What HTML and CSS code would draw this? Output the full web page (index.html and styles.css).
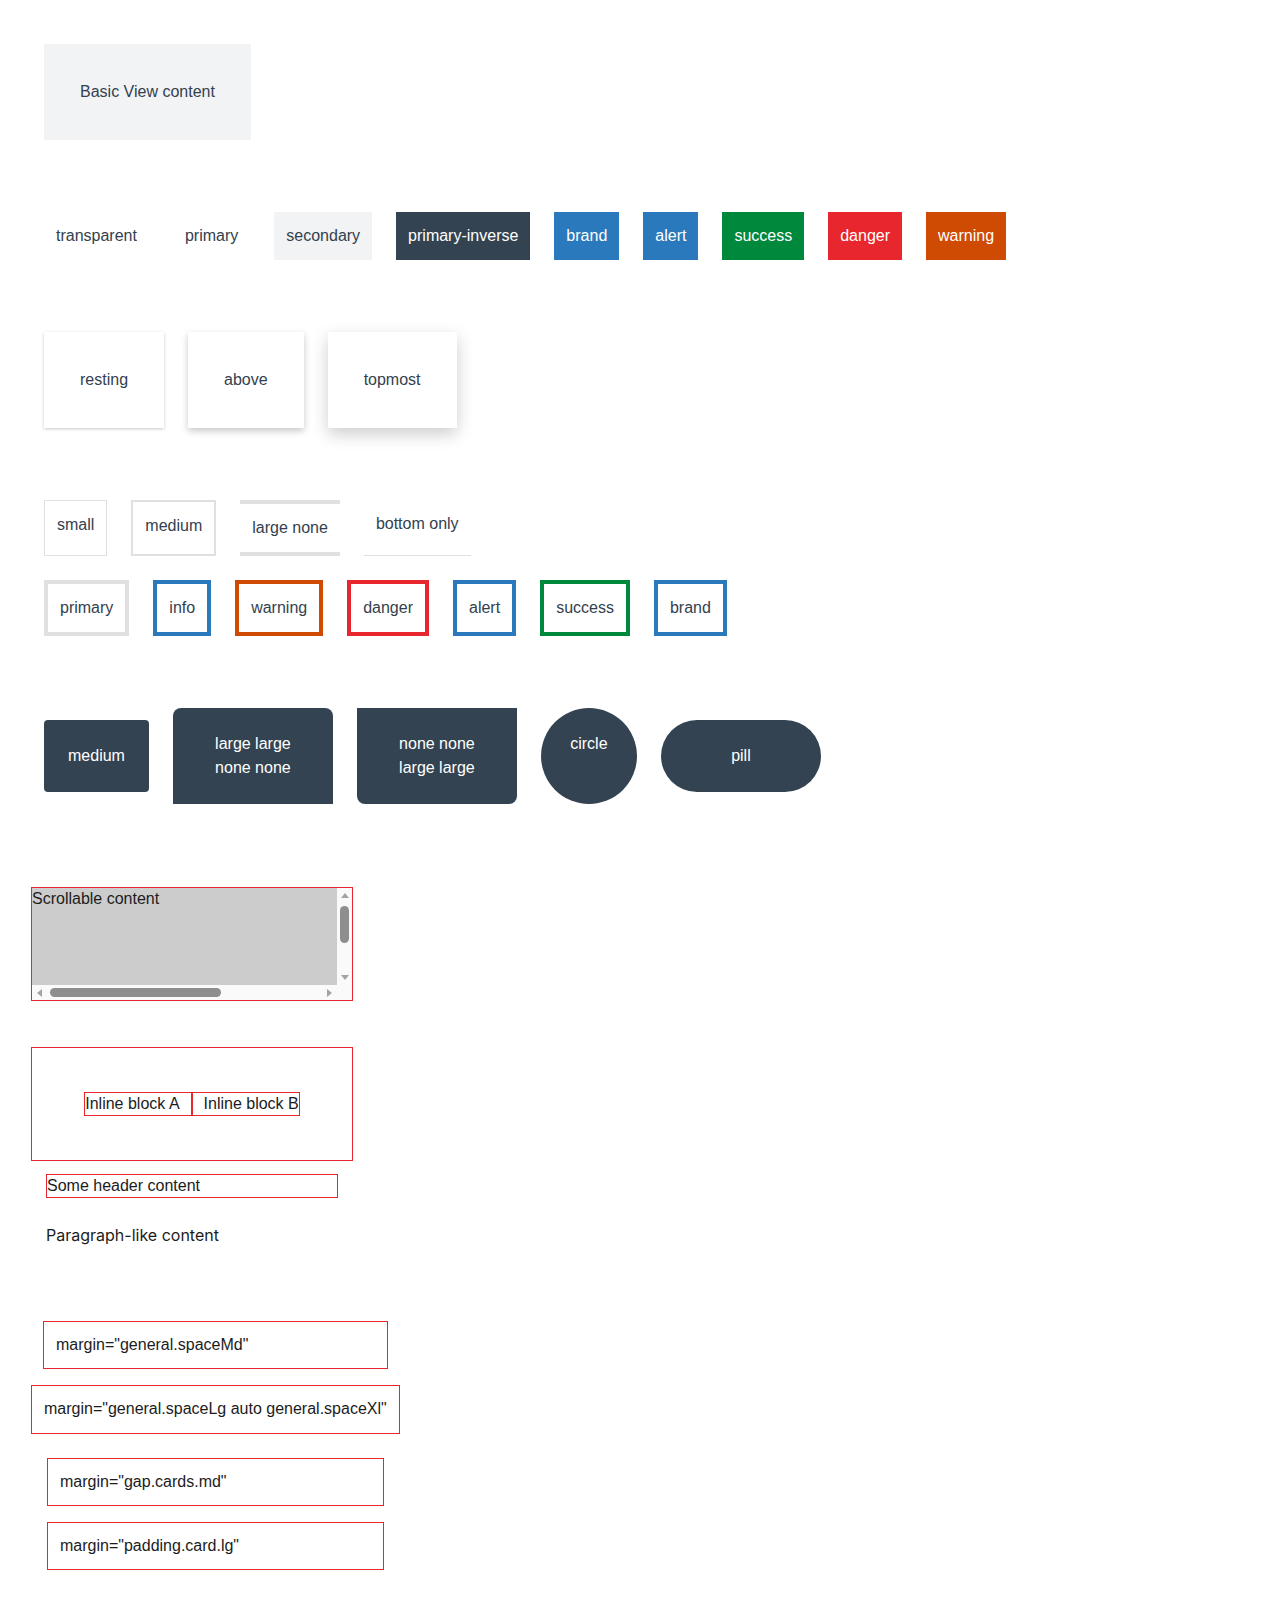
FILE: index.html
```html
<!DOCTYPE html>
<html lang="en">
<head>
  <meta charset="UTF-8">
  <meta name="viewport" content="width=device-width, initial-scale=1.0">
  <title>View - Examples</title>
  <link rel="stylesheet" href="styles.css">
</head>
<body>
  <div class="showcase">
    <!-- basic -->
    <div class="view view-secondary view-pad-xl">Basic View content</div>

    <!-- backgrounds -->
    <div class="row">
      <div class="view view-pad-md">transparent</div>
      <div class="view view-pad-md">primary</div>
      <div class="view view-pad-md view-secondary">secondary</div>
      <div class="view view-pad-md view-inverse">primary-inverse</div>
      <div class="view view-pad-md view-brand">brand</div>
      <div class="view view-pad-md view-alert">alert</div>
      <div class="view view-pad-md view-success">success</div>
      <div class="view view-pad-md view-danger">danger</div>
      <div class="view view-pad-md view-warning">warning</div>
    </div>

    <!-- shadows -->
    <div class="row">
      <div class="view view-pad-xl shadow-resting">resting</div>
      <div class="view view-pad-xl shadow-above">above</div>
      <div class="view view-pad-xl shadow-topmost">topmost</div>
    </div>

    <!-- borders -->
    <div class="border-rows">
      <div class="row row-stretch">
        <div class="view view-pad-md bw-small">small</div>
        <div class="view view-pad-md bw-medium">medium</div>
        <div class="view view-pad-md bw-large-none">large none</div>
        <div class="view view-pad-md bw-bottom">bottom only</div>
      </div>
      <div class="row">
        <div class="view view-pad-md bc bc-primary">primary</div>
        <div class="view view-pad-md bc bc-info">info</div>
        <div class="view view-pad-md bc bc-warning">warning</div>
        <div class="view view-pad-md bc bc-danger">danger</div>
        <div class="view view-pad-md bc bc-alert">alert</div>
        <div class="view view-pad-md bc bc-success">success</div>
        <div class="view view-pad-md bc bc-brand">brand</div>
      </div>
    </div>

    <!-- radius -->
    <div class="row row-center">
      <div class="view view-pad-lg view-inverse r-medium">medium</div>
      <div class="view view-pad-lg view-inverse r-wide r-top">large large none none</div>
      <div class="view view-pad-lg view-inverse r-wide r-bottom">none none large large</div>
      <div class="view view-pad-lg view-inverse r-circle">circle</div>
      <div class="view view-pad-lg view-inverse r-wide r-pill">pill</div>
    </div>
  </div>

  <div class="layout">
    <div class="scroller">
      <div class="scroller-viewport">
        <div class="scroller-content">Scrollable content</div>
      </div>
      <div class="scrollbar scrollbar-v">
        <span class="sb-btn"><i class="arrow arrow-up"></i></span>
        <span class="sb-track"><i class="sb-thumb"></i></span>
        <span class="sb-btn"><i class="arrow arrow-down"></i></span>
      </div>
      <div class="scrollbar scrollbar-h">
        <span class="sb-btn"><i class="arrow arrow-left"></i></span>
        <span class="sb-track"><i class="sb-thumb"></i></span>
        <span class="sb-btn"><i class="arrow arrow-right"></i></span>
      </div>
      <div class="scrollbar-corner"></div>
    </div>

    <div class="inline-wrap">
      <div class="inline-item inline-a">Inline block A</div>
      <div class="inline-item inline-b">Inline block B</div>
    </div>

    <header class="as-header">Some header content</header>
    <p class="as-paragraph">Paragraph-like content</p>
  </div>

  <div class="margins">
    <div class="outlined m-md">margin="general.spaceMd"</div>
    <div class="outlined m-lg-auto-xl">margin="general.spaceLg auto general.spaceXl"</div>
    <div class="outlined m-gap">margin="gap.cards.md"</div>
    <div class="outlined m-card">margin="padding.card.lg"</div>
  </div>
</body>
</html>
```

FILE: styles.css
```css
body {
  margin: 0;
  font-family: 'Liberation Sans', Arial, sans-serif;
  font-size: 16px;
  color: #1c1c1c;
  background: #fff;
}

.showcase {
  padding: 44px 44px 0;
  display: flex;
  flex-direction: column;
  align-items: flex-start;
  gap: 72px;
  color: #33414e;
  line-height: 24px;
}

.row {
  display: flex;
  gap: 24px;
  align-items: flex-start;
}

.row-stretch {
  align-items: stretch;
}

.row-center {
  align-items: center;
}

.border-rows {
  display: flex;
  flex-direction: column;
  gap: 24px;
}

.view {
  box-sizing: border-box;
  background: #fff;
}

.view-pad-md { padding: 12px; }
.view-pad-lg { padding: 24px; }
.view-pad-xl { padding: 36px; }

.view-secondary { background: #f2f3f5; }
.view-inverse { background: #344351; color: #fff; }
.view-brand { background: #2a79bc; color: #fff; }
.view-alert { background: #2a79bc; color: #fff; }
.view-success { background: #00883d; color: #fff; }
.view-danger { background: #e8262d; color: #fff; }
.view-warning { background: #cf4a02; color: #fff; }

/* elevation */
.shadow-resting { box-shadow: 0 1px 3px rgba(0, 0, 0, 0.22); }
.shadow-above { box-shadow: 0 3px 7px rgba(0, 0, 0, 0.22); }
.shadow-topmost { box-shadow: 0 6px 16px rgba(0, 0, 0, 0.2); }

/* border widths */
.bw-small { border: 1px solid #e0e0e0; }
.bw-medium { border: 2px solid #e0e0e0; }
.bw-large-none {
  border-top: 4px solid #e0e0e0;
  border-bottom: 4px solid #e0e0e0;
}
.bw-bottom { border-bottom: 1px solid #e0e0e0; }

/* border colors */
.bc { border: 4px solid #e0e0e0; }
.bc-info { border-color: #2a79bc; }
.bc-warning { border-color: #cf4a02; }
.bc-danger { border-color: #e8262d; }
.bc-alert { border-color: #2a79bc; }
.bc-success { border-color: #00883d; }
.bc-brand { border-color: #2a79bc; }

/* radius */
.view.r-medium { border-radius: 4px; }
.r-wide { width: 160px; text-align: center; }
.r-top { border-radius: 8px 8px 0 0; }
.r-bottom { border-radius: 0 0 8px 8px; }
.r-circle {
  width: 96px;
  height: 96px;
  border-radius: 50%;
  text-align: center;
}
.r-pill { border-radius: 9999px; }

/* layout helpers */
.layout {
  width: 322px;
  margin: 83px 0 0 31px;
  line-height: 1.4;
}

/* scroll box with classic scrollbars */
.scroller {
  box-sizing: border-box;
  width: 322px;
  height: 114px;
  border: 1px solid #e8262d;
  display: grid;
  grid-template-columns: 1fr 15px;
  grid-template-rows: 1fr 15px;
  background: #fafafa;
}

.scroller-viewport {
  overflow: hidden;
}

.scroller-content {
  width: 474px;
  height: 151px;
  background: #ccc;
}

.scrollbar {
  display: flex;
}

.scrollbar-v { flex-direction: column; }

.sb-btn {
  flex: 0 0 15px;
  height: 15px;
  display: flex;
  align-items: center;
  justify-content: center;
}

.sb-track {
  flex: 1;
  padding: 3px;
}

.sb-thumb {
  display: block;
  background: #8e8e8e;
  border-radius: 5px;
}

.scrollbar-v .sb-thumb { height: 37px; }
.scrollbar-h .sb-thumb { width: 171px; height: 9px; }

.arrow {
  width: 0;
  height: 0;
  border: 4px solid transparent;
}

.arrow-up { border-top: 0; border-bottom: 5px solid #a3a3a3; }
.arrow-down { border-bottom: 0; border-top: 5px solid #a3a3a3; }
.arrow-left { border-left: 0; border-right: 5px solid #a3a3a3; }
.arrow-right { border-right: 0; border-left: 5px solid #a3a3a3; }

.scrollbar-corner {
  background: #fafafa;
}

.inline-wrap {
  box-sizing: border-box;
  height: 114px;
  margin-top: 46px;
  border: 1px solid #e8262d;
  display: flex;
  align-items: center;
  justify-content: center;
}

.inline-item {
  border: 1px solid #e8262d;
}

.inline-a { padding-right: 11px; }
.inline-b { padding-left: 11px; }

.as-header {
  margin: 13px 15px 0;
  border: 1px solid #e8262d;
}

.as-paragraph {
  margin: 26px 15px 0;
  font-family: Inter, sans-serif;
}

.margins {
  display: flow-root;
  width: fit-content;
  margin: 62px 0 0 31px;
  line-height: 1.4;
}

.outlined {
  padding: 12px;
  border: 1px solid #e8262d;
}

.m-md { margin: 12px; }
.m-lg-auto-xl { margin: 16px auto 24px; }
.m-gap { margin: 16px; }
.m-card { margin: 16px; }
```
